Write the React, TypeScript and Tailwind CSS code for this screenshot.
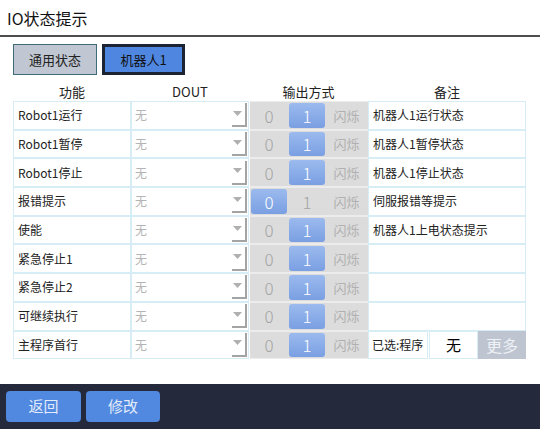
import React from 'react';

type Row = {
  name: string;
  mode: 0 | 1;
  note: string;
};

const rows: Row[] = [
  { name: 'Robot1运行', mode: 1, note: '机器人1运行状态' },
  { name: 'Robot1暂停', mode: 1, note: '机器人1暂停状态' },
  { name: 'Robot1停止', mode: 1, note: '机器人1停止状态' },
  { name: '报错提示', mode: 0, note: '伺服报错等提示' },
  { name: '使能', mode: 1, note: '机器人1上电状态提示' },
  { name: '紧急停止1', mode: 1, note: '' },
  { name: '紧急停止2', mode: 1, note: '' },
  { name: '可继续执行', mode: 1, note: '' },
  { name: '主程序首行', mode: 1, note: '' },
];

const font = { fontFamily: '"Noto Sans CJK SC", "Noto Sans", sans-serif' };

const Segment: React.FC<{ label: string; on: boolean }> = ({ label, on }) => (
  <div
    className={`w-[36px] h-full flex items-center justify-center rounded-[3px] text-[17px] font-light ${
      on ? 'bg-gradient-to-b from-[#9bbaee] to-[#7a9fe2] text-white' : 'text-[#a4a4a4]'
    }`}
  >
    {label}
  </div>
);

const DataRow: React.FC<{ row: Row; last: boolean }> = ({ row, last }) => (
  <div className="flex h-[28.7px] text-[12px]">
    <div className="w-[118px] border border-[#d6edf5] flex items-center pl-[4px] text-[#222]">{row.name}</div>
    <div className="w-[118px] border border-[#d6edf5] flex items-center pl-[3px] text-[#b4b4b4] bg-white">
      <span className="flex-1">无</span>
      <div className="w-[15px] h-[24px] mr-[1px] border-r-2 border-b-2 border-[#a4a4a4] flex items-center justify-center">
        <svg width="9" height="5" viewBox="0 0 9 5" className="mb-[2px] mr-[2px]">
          <path d="M0 0 L9 0 L4.5 5 Z" fill="#b0b0b0" />
        </svg>
      </div>
    </div>
    <div className="w-[118px] ml-[1px] bg-[#dcdcdc] border-y border-[#ececec] flex items-center py-[1px] pl-[1px]">
      <Segment label="0" on={row.mode === 0} />
      <div className="w-[2px]" />
      <Segment label="1" on={row.mode === 1} />
      <div className="flex-1 text-center text-[13px] text-[#b0b0b0]">闪烁</div>
    </div>
    {last ? (
      <div className="flex w-[158px]">
        <div className="w-[60px] border border-[#d6edf5] flex items-center pl-[3px] text-[#222] whitespace-nowrap">已选:程序</div>
        <div className="w-[49px] ml-[1px] border border-[#d6edf5] flex items-center justify-center text-[15px] text-black">无</div>
        <div className="flex-1 bg-[#bec5d1] flex items-center justify-center text-[16px] text-[#eef1f5]">更多</div>
      </div>
    ) : (
      <div className="w-[158px] border border-[#d6edf5] flex items-center pl-[4px] text-[#222]">{row.note}</div>
    )}
  </div>
);

export default function App() {
  return (
    <div className="w-[540px] h-[429px] bg-white flex flex-col overflow-hidden" style={font}>
      <div className="h-[35px] flex items-center pl-[7px] text-[16px] text-[#111] border-b-2 border-[#4e4e4e] box-content">
        IO状态提示
      </div>

      <div className="flex gap-[5px] pl-[13px] mt-[7px]">
        <button className="w-[84px] h-[31px] bg-[#c1c7d2] border border-[#3f6a78] text-[13px] text-[#222]">通用状态</button>
        <button className="w-[83px] h-[31px] bg-[#4f86e0] border-[3px] border-[#1c2333] text-[13px] text-[#111]">机器人1</button>
      </div>

      <div className="flex pl-[13px] mt-[8px] h-[18px] text-[13px] text-[#222] items-center">
        <div className="w-[118px] text-center">功能</div>
        <div className="w-[118px] text-center">DOUT</div>
        <div className="w-[119px] text-center">输出方式</div>
        <div className="w-[158px] text-center">备注</div>
      </div>

      <div className="pl-[13px] flex flex-col">
        {rows.map((r, i) => (
          <DataRow key={r.name} row={r} last={i === rows.length - 1} />
        ))}
      </div>

      <div className="mt-auto h-[45px] bg-[#242a3c] flex items-center gap-[5px] pl-[6px]">
        <button className="w-[75px] h-[31px] rounded-[4px] bg-[#5189e0] text-[15px] text-[#e4ecfa]">返回</button>
        <button className="w-[74px] h-[31px] rounded-[4px] bg-[#5189e0] text-[15px] text-[#e4ecfa]">修改</button>
      </div>
    </div>
  );
}
